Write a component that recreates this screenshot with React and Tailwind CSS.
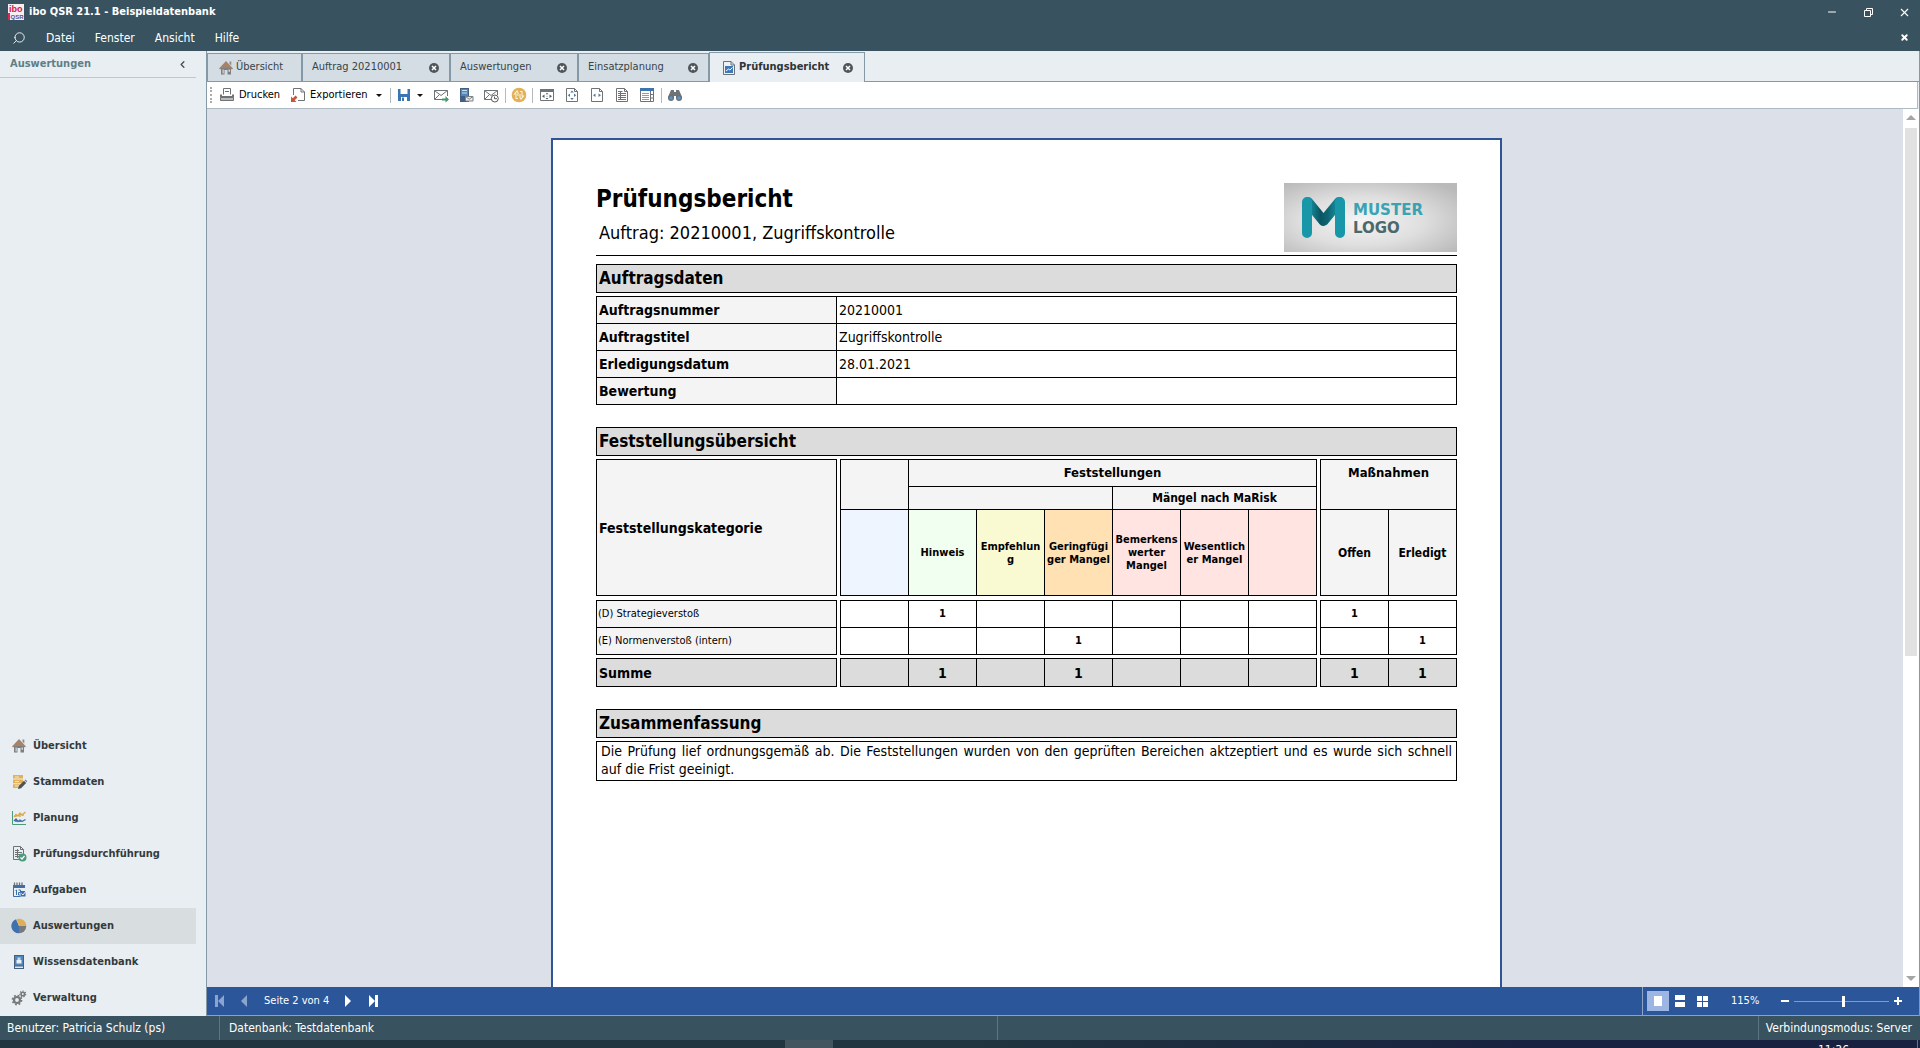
import { ChevronLeft, Minus, Search, X } from "lucide-react";

const HomeIcon = () => (
  <svg width="16" height="16" viewBox="0 0 16 16" aria-hidden="true">
    <path d="M3 8h10v6.5H9.5V10h-3v4.5H3z" fill="#7d7f82" />
    <path d="M4.6 9.5h1v4h-1zM10.6 9.5h1.2v2.2h-1.2z" fill="#e8eef1" />
    <path d="M8 1 15 8.4l-1.2 1.2L8 4 2.2 9.6 1 8.4z" fill="#a5836b" />
    <path d="M8 3.2 13 8H3z" fill="#a5836b" />
    <path d="M11.5 1.5h1.8v4l-1.8-1.8z" fill="#8b8d90" />
  </svg>
);

const MasterDataIcon = () => (
  <svg width="16" height="16" viewBox="0 0 16 16" aria-hidden="true">
    <path d="M2 1h10v3.6H2zM2 5.6h10v3.6H2zM2 10.2h8v3.8H2z" fill="#e3b158" />
    <path d="M4 2.5h4v1H4zM4 7h4v1H4zM4 11.6h4v1H4z" fill="#f7e7c4" />
    <path d="m7 15 .8-3L13 6.8l2.2 2.2L10 14.2z" fill="#4d5256" />
    <path d="m13.6 6.2.9-.8 2 2-.8.9z" fill="#77797c" />
  </svg>
);

const PlanningIcon = () => (
  <svg width="16" height="16" viewBox="0 0 16 16" fill="none" aria-hidden="true">
    <path d="M1.5 1v13.5H15" stroke="#4c9a7c" />
    <path d="m3 7 2-2.5L7 6l2-3 2 2 3.5-3M5 4v3M9 3v4M12 3.5V6" stroke="#dba94c" strokeWidth="1.4" />
    <path d="m3 11 2-2 2 2.5 2-1.5 2 1.5 3.5-2M5 9v3M9 10v2" stroke="#3d6fa8" strokeWidth="1.4" />
  </svg>
);

const AuditIcon = () => (
  <svg width="16" height="16" viewBox="0 0 16 16" fill="none" aria-hidden="true">
    <path d="M2.5.5h7l3 3v10h-10z" stroke="#6f7376" />
    <path d="M9.5.5v3h3M4 4.500h4M4 6.500h7M4 8.500h7M4 10.500h4M6.500 3v9" stroke="#6f7376" />
    <circle cx="11.500" cy="11.500" r="4" fill="#4c9a7c" />
    <path d="m9.500 11.500 1.500 1.500 2.500-3" stroke="#fff" strokeWidth="1.2" />
  </svg>
);

const TasksIcon = () => (
  <svg width="16" height="16" viewBox="0 0 16 16" fill="none" aria-hidden="true">
    <path d="M2 3h12v3H2z" fill="#3d6fa8" />
    <path d="M3.500.5v3M6 .5v3M8.500.5v3M11 .5v3" stroke="#6f7376" strokeWidth="1.3" />
    <path d="M2.500 6v8.500h7" stroke="#3d6fa8" />
    <path d="m4.500 8.500 1-.5v5M7.500 8h2v2.500h-2V13H9" stroke="#3d6fa8" />
    <path d="M9.500 9h5v5.500h-5z" fill="#3d6fa8" />
    <path d="m10.500 11.500 1.300 1.500 3.400-4" stroke="#fff" />
  </svg>
);

const PieIcon = () => (
  <svg width="16" height="16" viewBox="0 0 16 16" aria-hidden="true">
    <path d="M8 8 5 1.2A7.3 7.3 0 0 0 8 15.3z" fill="#3f72ad" />
    <path d="M8 8 5.5 1.1A7.3 7.3 0 0 1 15.3 8z" fill="#dfae5a" />
    <path d="M8 8h7.3A7.3 7.3 0 0 1 8 15.3z" fill="#77797c" />
  </svg>
);

const KnowledgeIcon = () => (
  <svg width="16" height="16" viewBox="0 0 16 16" aria-hidden="true">
    <path d="M3 1h10v14H3z" fill="#44607c" />
    <path d="M4 2h8v9.500H4z" fill="#4f86bd" />
    <path d="M5.500 6h5v3.500h-5z" fill="#e9f0f6" />
    <path d="M6.500 3.500h3V6h-3z" fill="#c7d8e8" />
    <path d="M4 12.500h8V14H4z" fill="#dfe6ec" />
  </svg>
);

const GearsIcon = () => (
  <svg width="16" height="16" viewBox="0 0 16 16" fill="none" aria-hidden="true">
    <circle cx="6" cy="10" r="3" stroke="#77797c" strokeWidth="2.200" />
    <circle cx="6" cy="10" r="4.600" stroke="#77797c" strokeWidth="1.600" strokeDasharray="1.800 1.810" />
    <circle cx="11.800" cy="4" r="1.800" stroke="#77797c" strokeWidth="1.600" />
    <circle cx="11.800" cy="4" r="2.900" stroke="#77797c" strokeWidth="1.200" strokeDasharray="1.200 1.400" />
  </svg>
);

const PrinterIcon = () => (
  <svg width="16" height="16" viewBox="0 0 16 16" fill="none" aria-hidden="true">
    <path d="M4.500 7.500v-6h7v6" stroke="#707376" />
    <path d="M6 4.500h4" stroke="#707376" />
    <path d="M1 7.500h2V9h10V7.500h2v3H1z" fill="#707376" />
    <path d="M1.500 10.500h13v3h-13z" stroke="#707376" fill="#b9bbbd" />
  </svg>
);

const ExportIcon = () => (
  <svg width="16" height="16" viewBox="0 0 16 16" fill="none" aria-hidden="true">
    <path d="M3.500 8V1.500h7.500l3.500 3.500v8.500H8" stroke="#707376" />
    <path d="M11 1.500V5h3.500" stroke="#707376" />
    <path d="M1 9.500V15h5.500l-1.800-1.800L7.500 10.500 5.500 8.500 2.800 11.300z" fill="#c8553d" />
  </svg>
);

const SaveIcon = () => (
  <svg width="14" height="14" viewBox="0 0 14 14" aria-hidden="true">
    <path d="M1 1h12v12H1z" fill="#3c73b1" />
    <path d="M3.500 1h7v5h-7zM4 9h6v4H4z" fill="#fff" />
    <path d="M5 9.500h2V13H5z" fill="#3c73b1" />
  </svg>
);

const MailSendIcon = () => (
  <svg width="16" height="16" viewBox="0 0 16 16" fill="none" aria-hidden="true">
    <path d="M9 12.500H1.500v-9h13V9" stroke="#707376" />
    <path d="m1.500 3.500 6.500 5 6.500-5M1.500 12.500l5-5" stroke="#707376" />
    <path d="M9 11.500h3.500V9l3.500 3.500-3.500 3V13.500H9z" fill="#45946f" />
  </svg>
);

const ServerMailIcon = () => (
  <svg width="16" height="16" viewBox="0 0 16 16" aria-hidden="true">
    <path d="M2 1h9v14H2z" fill="#3f5f84" />
    <path d="M3 2h7v7H3z" fill="#4f86bd" />
    <path d="M4 3h5v1H4zM4 5.500h5v1H4z" fill="#cfdeec" />
    <path d="M7.500 9.500H15V14H7.500z" fill="#eceef0" stroke="#7b8187" />
    <path d="m7.500 9.500 3.700 2.700L15 9.500" fill="none" stroke="#7b8187" />
  </svg>
);

const MailClockIcon = () => (
  <svg width="16" height="16" viewBox="0 0 16 16" fill="none" aria-hidden="true">
    <path d="M8 12.500H1.500v-9h13V8" stroke="#707376" />
    <path d="m1.500 3.500 6.500 5 6.500-5M1.500 12.500l5-5" stroke="#707376" />
    <circle cx="11.800" cy="11.500" r="3.500" fill="#fff" stroke="#55585b" />
    <path d="M11.500 9.500v2.200h2.500" stroke="#55585b" />
  </svg>
);

const SyncIcon = () => (
  <svg width="16" height="16" viewBox="0 0 16 16" fill="none" aria-hidden="true">
    <circle cx="8" cy="8" r="7.300" fill="#e2b055" />
    <path d="M7 11.500H5V7H3.500L6 4l1 1.500V9M9 4.500h2V9h1.500L10 12l-1-1.500V7" stroke="#fbf3df" strokeWidth="1.100" />
  </svg>
);

const FitWindowIcon = () => (
  <svg width="16" height="16" viewBox="0 0 16 16" fill="none" aria-hidden="true">
    <path d="M1.500 2.500h13v11h-13z" stroke="#707376" />
    <path d="M1 2h14v3H1z" fill="#707376" />
    <path d="M5.500 7.500v3.500L3 9.200zM10.500 7.500v3.500L13 9.200zM8 5.800 9.500 7.300h-3zM8 12.600 9.500 11h-3z" fill="#55585b" />
    <path d="M7.500 8.700h1v1h-1z" fill="#5b85b5" />
  </svg>
);

const FitPageIcon = () => (
  <svg width="16" height="16" viewBox="0 0 16 16" fill="none" aria-hidden="true">
    <path d="M2.500 1.500h8l3 3v10h-11z" stroke="#707376" />
    <path d="M10.500 1.500v3h3" stroke="#707376" />
    <path d="M6 6.500v3.500L3.800 8.200zM10 6.500v3.500l2.200-1.800zM8 3.500l1.800 2H6.200zM8 13l1.800-2H6.200z" fill="#56779c" />
  </svg>
);

const FitWidthIcon = () => (
  <svg width="16" height="16" viewBox="0 0 16 16" fill="none" aria-hidden="true">
    <path d="M2.500 1.500h8l3 3v10h-11z" stroke="#707376" />
    <path d="M10.500 1.500v3h3" stroke="#707376" />
    <path d="M6.500 6.500v3.500L4 8.200zM9.500 6.500v3.500L12 8.200z" fill="#56779c" />
  </svg>
);

const TextPageIcon = () => (
  <svg width="16" height="16" viewBox="0 0 16 16" fill="none" aria-hidden="true">
    <path d="M2.500 1.500h8l3 3v10h-11z" stroke="#707376" />
    <path d="M10.500 1.500v3h3M4 4.500h4.500M4 6.500h8M4 8.500h8M4 10.500h8M4 12.500h8M6.500 4v9" stroke="#707376" />
  </svg>
);

const ThumbnailsIcon = () => (
  <svg width="16" height="16" viewBox="0 0 16 16" fill="none" aria-hidden="true">
    <path d="M1.500 1.500h13v13h-13z" fill="#fff" stroke="#707376" />
    <path d="M1 1h14v3H1z" fill="#3c73b1" />
    <path d="M11.500 4v10M11.500 7.500H15M11.500 11H15" stroke="#707376" />
    <path d="M3 6.500h7M3 8.500h7M3 10.500h7M3 12.500h7" stroke="#7ba0c8" />
  </svg>
);

const BinocularsIcon = () => (
  <svg width="16" height="16" viewBox="0 0 16 16" aria-hidden="true">
    <path d="M4 3h3v2h2V3h3l3 7v1H9V9H7v2H1v-1z" fill="#707376" />
    <circle cx="4" cy="11" r="3" fill="#66707b" />
    <circle cx="12" cy="11" r="3" fill="#66707b" />
    <circle cx="4" cy="11" r="1.700" fill="#5d93c9" />
    <circle cx="12" cy="11" r="1.700" fill="#5d93c9" />
  </svg>
);

const ReportIcon = () => (
  <svg width="14" height="16" viewBox="0 0 14 16" fill="none" aria-hidden="true">
    <path d="M1.500 1.500h7.500l3.500 3.500v9.500h-11z" fill="#eef2f5" stroke="#6a7178" />
    <path d="M9 1.500V5h3.500" stroke="#6a7178" />
    <path d="M3 6h8v7H3z" fill="#3f78b5" />
    <path d="m4 11 2.500-2L8 10l2.500-2.500" stroke="#fff" />
  </svg>
);

const AppIcon = () => (
  <svg width="16" height="16" viewBox="0 0 16 16" aria-hidden="true">
    <path d="M0 0h16v16H0z" fill="#f6eef2" />
    <path d="M0 9h2v7H0z" fill="#d8265a" />
    <text x="1" y="7.500" fontSize="9" fontWeight="700" fontFamily="Liberation Sans" fill="#d4144a">ibo</text>
    <text x="2.500" y="15" fontSize="6" fontWeight="700" fontFamily="Liberation Sans" fill="#5a4f98">QSR</text>
  </svg>
);

const Logo = () => (
  <svg className="shrink-0" width="173" height="69" viewBox="0 0 173 69" role="img" aria-label="Muster Logo">
    <defs>
      <radialGradient id="logoBg" cx="0.45" cy="0.55" r="0.7">
        <stop offset="0" stopColor="#f4f4f4" />
        <stop offset="0.5" stopColor="#dfdfdf" />
        <stop offset="1" stopColor="#b9b9b9" />
      </radialGradient>
      <linearGradient id="logoFold" x1="0" y1="0" x2="1" y2="0">
        <stop offset="0" stopColor="#1797a8" />
        <stop offset="0.4" stopColor="#0b5562" />
        <stop offset="0.65" stopColor="#0e6673" />
        <stop offset="1" stopColor="#1797a8" />
      </linearGradient>
    </defs>
    <rect width="173" height="69" fill="url(#logoBg)" />
    <g fill="none" strokeLinecap="round" strokeLinejoin="round" strokeWidth="10">
      <path d="M24 19 39.500 38 55 19" stroke="url(#logoFold)" />
      <path d="M23 50V19M56 50V19" stroke="#1797a8" />
    </g>
    <g fontFamily="DejaVu Sans" fontWeight="700" fontSize="15">
      <text x="69" y="32" fill="#3aa3b3">MUSTER</text>
      <text x="69" y="50" fill="#4d686c">LOGO</text>
    </g>
  </svg>
);

const menuItems = ["Datei", "Fenster", "Ansicht", "Hilfe"];

const navItems = [
  { label: "Übersicht", icon: HomeIcon },
  { label: "Stammdaten", icon: MasterDataIcon },
  { label: "Planung", icon: PlanningIcon },
  { label: "Prüfungsdurchführung", icon: AuditIcon },
  { label: "Aufgaben", icon: TasksIcon },
  { label: "Auswertungen", icon: PieIcon, active: true },
  { label: "Wissensdatenbank", icon: KnowledgeIcon },
  { label: "Verwaltung", icon: GearsIcon },
];

const tabs = [
  { label: "Auftrag 20210001", width: "w-[148px]" },
  { label: "Auswertungen", width: "w-32" },
  { label: "Einsatzplanung", width: "w-[131px]" },
];

const orderData = [
  ["Auftragsnummer", "20210001"],
  ["Auftragstitel", "Zugriffskontrolle"],
  ["Erledigungsdatum", "28.01.2021"],
  ["Bewertung", ""],
];

const findingColumns = [
  { label: "", color: "bg-[#eef5ff]" },
  { label: "Hinweis", color: "bg-[#f0fff0]" },
  { label: "Empfehlun\ng", color: "bg-[#fafad2]" },
  { label: "Geringfügi\nger Mangel", color: "bg-[#ffe1b3]" },
  { label: "Bemerkens\nwerter\nMangel", color: "bg-[#ffe4e1]" },
  { label: "Wesentlich\ner Mangel", color: "bg-[#ffe4e1]" },
  { label: "", color: "bg-[#ffe4e1]" },
];

const findingRows = [
  { name: "(D) Strategieverstoß", findings: ["", "1", "", "", "", "", ""], measures: ["1", ""] },
  { name: "(E) Normenverstoß (intern)", findings: ["", "", "", "1", "", "", ""], measures: ["", "1"] },
];

const totals = { findings: ["", "1", "", "1", "", "", ""], measures: ["1", "1"] };

const TitleBar = () => (
  <header className="bg-[#38535f] text-white">
    <div className="flex h-6 items-center justify-between px-2">
      <h1 className="flex items-center gap-[5px] text-[11px] font-bold">
        <AppIcon />
        ibo QSR 21.1 - Beispieldatenbank
      </h1>
      <div className="flex items-center gap-5">
        <button type="button" aria-label="Minimieren" className="flex size-4 items-center justify-center">
          <Minus size={12} strokeWidth={2} />
        </button>
        <button type="button" aria-label="Wiederherstellen" className="flex size-4 items-center justify-center">
          <svg width="9" height="9" viewBox="0 0 9 9" fill="none" stroke="currentColor" aria-hidden="true">
            <path d="M.5 2.500h6v6h-6zM2.500 2.500v-2h6v6h-2" />
          </svg>
        </button>
        <button type="button" aria-label="Schließen" className="flex size-4 items-center justify-center">
          <X size={13} strokeWidth={2} />
        </button>
      </div>
    </div>
    <nav className="flex h-[27px] items-center gap-5 px-[11px] text-xs">
      <button type="button" aria-label="Suchen" className="pl-px">
        <Search size={14} strokeWidth={1.5} className="-scale-x-100" />
      </button>
      {menuItems.map((item) => (
        <button key={item} type="button">{item}</button>
      ))}
      <button type="button" aria-label="Fenster schließen" className="ml-auto">
        <X size={9} strokeWidth={5} />
      </button>
    </nav>
  </header>
);

const Sidebar = () => (
  <aside className="flex w-[206px] shrink-0 flex-col justify-between bg-[#e8eef1]">
    <div className="mr-[10px] flex h-[27px] items-center justify-between border-b border-[#b9cad3] pl-[10px] pr-2 text-[11px] font-bold text-[#5f7f88]">
      Auswertungen
      <button type="button" aria-label="Einklappen" className="text-[#4a4f53]">
        <ChevronLeft size={11} strokeWidth={3} />
      </button>
    </div>
    <nav className="mr-[10px]">
      {navItems.map(({ label, icon: Icon, active }) => (
        <a
          key={label}
          href="#"
          className={`flex h-9 items-center gap-[6px] pl-[11px] text-[11px] font-bold text-[#333a3d] ${active ? "bg-[#d8dddf]" : ""}`}
        >
          <Icon />
          {label}
        </a>
      ))}
    </nav>
  </aside>
);

const CloseDot = () => (
  <svg width="10" height="10" viewBox="0 0 10 10" aria-hidden="true">
    <circle cx="5" cy="5" r="5" fill="#4f565b" />
    <path d="m3 3 4 4M7 3 3 7" stroke="#fff" strokeWidth="1.5" />
  </svg>
);

const TabBar = () => (
  <div className="flex h-[31px] items-end border-b border-[#8499a5] bg-[#e8eef1] text-[11px] text-[#3a4247]">
    <button type="button" className="flex h-7 w-[95px] items-center gap-[2px] border-x border-t border-[#8499a5] bg-[#d4dde4] pl-[10px]">
      <HomeIcon />
      Übersicht
    </button>
    {tabs.map(({ label, width }) => (
      <div key={label} className={`flex h-7 items-center justify-between border-x border-t border-[#8499a5] bg-[#d4dde4] pl-[9px] pr-[10px] ${width}`}>
        <button type="button">{label}</button>
        <button type="button" aria-label={`${label} schließen`}><CloseDot /></button>
      </div>
    ))}
    <div className="-mb-px flex h-[30px] w-[156px] items-center justify-between border-x border-t border-[#8499a5] bg-[#e8eef1] pl-3 pr-[11px] font-bold text-[#2e3437]">
      <button type="button" className="flex items-center gap-[3px]">
        <ReportIcon />
        Prüfungsbericht
      </button>
      <button type="button" aria-label="Prüfungsbericht schließen"><CloseDot /></button>
    </div>
  </div>
);

const Caret = () => (
  <svg width="6" height="3" viewBox="0 0 6 3" aria-hidden="true">
    <path d="M0 0h6L3 3z" fill="#111" />
  </svg>
);

const Divider = () => <span className="h-[15px] w-px bg-[#b4b9bd]" />;

const ToolButton = ({ label, children }) => (
  <button type="button" aria-label={label}>{children}</button>
);

const Toolbar = () => (
  <div className="mr-px flex h-[27px] items-center border-b border-r border-[#aebbc3] bg-white text-[11px] text-black">
    <span className="ml-[3px] h-4 border-l-2 border-dotted border-[#a9adb0]" />
    <button type="button" className="ml-[7px] flex items-center gap-1">
      <PrinterIcon />
      Drucken
    </button>
    <button type="button" className="ml-[10px] flex items-center gap-1">
      <ExportIcon />
      Exportieren
    </button>
    <span className="mx-2 flex"><Caret /></span>
    <div className="flex items-center gap-[6px]">
      <Divider />
      <ToolButton label="Speichern"><SaveIcon /></ToolButton>
      <Caret />
    </div>
    <div className="ml-[10px] flex items-center gap-[9px]">
      <ToolButton label="Per E-Mail senden"><MailSendIcon /></ToolButton>
      <ToolButton label="Im Archiv ablegen"><ServerMailIcon /></ToolButton>
      <ToolButton label="Später senden"><MailClockIcon /></ToolButton>
    </div>
    <div className="ml-[6px] flex items-center gap-[5px]">
      <Divider />
      <ToolButton label="Aktualisieren"><SyncIcon /></ToolButton>
      <Divider />
    </div>
    <div className="ml-[6px] flex items-center gap-[9px]">
      <ToolButton label="An Fenster anpassen"><FitWindowIcon /></ToolButton>
      <ToolButton label="Ganze Seite"><FitPageIcon /></ToolButton>
      <ToolButton label="Seitenbreite"><FitWidthIcon /></ToolButton>
      <ToolButton label="Textansicht"><TextPageIcon /></ToolButton>
      <ToolButton label="Miniaturen"><ThumbnailsIcon /></ToolButton>
    </div>
    <div className="ml-[6px] flex items-center gap-[5px]">
      <Divider />
      <ToolButton label="Suchen"><BinocularsIcon /></ToolButton>
    </div>
  </div>
);

const SectionHeading = ({ children }) => (
  <h3 className="mb-[3px] h-[29px] border border-black bg-[#dcdcdc] px-[2px] text-[17px] leading-[27px] font-bold">
    {children}
  </h3>
);

const OrderTable = () => (
  <table className="w-full table-fixed border-collapse text-left text-sm leading-5">
    <colgroup>
      <col className="w-60" />
      <col />
    </colgroup>
    <tbody>
      {orderData.map(([label, value]) => (
        <tr key={label} className="h-[27px]">
          <th scope="row" className="border border-black bg-[#f4f4f4] px-[2px] font-bold">{label}</th>
          <td className="border border-black px-[2px]">{value}</td>
        </tr>
      ))}
    </tbody>
  </table>
);

// Empty cell that keeps the column blocks apart
const Gap = () => <td className="p-0" />;

const CountCells = ({ values }) =>
  values.map((value, i) => (
    <td key={i} className="border border-black p-0">{value}</td>
  ));

const FindingsTable = () => (
  <table className="w-full table-fixed border-collapse text-center">
    <colgroup>
      <col className="w-60" />
      <col className="w-1" />
      <col span="7" />
      <col className="w-1" />
      <col span="2" />
    </colgroup>
    <thead>
      <tr className="h-[27px] text-[13px] leading-4">
        <th rowSpan="3" className="border border-black bg-[#f4f4f4] px-[2px] text-left text-sm">Feststellungskategorie</th>
        <td rowSpan="3" className="p-0" />
        <td rowSpan="2" className="border border-black bg-[#f4f4f4] p-0" />
        <th colSpan="6" className="border border-black bg-[#f4f4f4] p-0">Feststellungen</th>
        <td rowSpan="3" className="p-0" />
        <th colSpan="2" rowSpan="2" className="border border-black bg-[#f4f4f4] px-0 pt-[5px] pb-0 align-top">Maßnahmen</th>
      </tr>
      <tr className="h-[23px] text-xs leading-4">
        <td colSpan="3" className="border border-black bg-[#f4f4f4] p-0" />
        <th colSpan="3" className="border border-black bg-[#f4f4f4] p-0">Mängel nach MaRisk</th>
      </tr>
      <tr className="h-[86px] text-[11px] leading-[13px]">
        {findingColumns.map(({ label, color }, i) => (
          <th key={i} className={`border border-black p-0 whitespace-pre-line ${color}`}>{label}</th>
        ))}
        <th className="border border-black bg-[#f4f4f4] p-0 text-xs">Offen</th>
        <th className="border border-black bg-[#f4f4f4] p-0 text-xs">Erledigt</th>
      </tr>
    </thead>
    <tbody className="text-[11px] leading-4 font-bold">
      <tr className="h-[5px]"><td colSpan="12" className="p-0" /></tr>
      {findingRows.map(({ name, findings, measures }) => (
        <tr key={name} className="h-[27px]">
          <th scope="row" className="border border-black bg-[#f4f4f4] px-px text-left font-normal">{name}</th>
          <Gap />
          <CountCells values={findings} />
          <Gap />
          <CountCells values={measures} />
        </tr>
      ))}
      <tr className="h-1"><td colSpan="12" className="p-0" /></tr>
    </tbody>
    <tfoot className="text-sm leading-5 font-bold">
      <tr className="h-7">
        <th scope="row" className="border border-black bg-[#dcdcdc] px-[2px] text-left">Summe</th>
        <Gap />
        {totals.findings.map((value, i) => (
          <td key={i} className="border border-black bg-[#dcdcdc] p-0">{value}</td>
        ))}
        <Gap />
        {totals.measures.map((value, i) => (
          <td key={i} className="border border-black bg-[#dcdcdc] p-0">{value}</td>
        ))}
      </tr>
    </tfoot>
  </table>
);

const ReportPage = () => (
  <article className="min-h-[1345px] w-full max-w-[951px] border-2 border-[#2f5597] bg-white px-[43px] pt-[43px] text-black">
    <div className="flex items-start justify-between border-b border-black pb-[3px]">
      <div>
        <h2 className="text-2xl leading-8 font-bold">Prüfungsbericht</h2>
        <p className="mt-[6px] pl-[3px] text-lg leading-6">Auftrag: 20210001, Zugriffskontrolle</p>
      </div>
      <Logo />
    </div>
    <section className="mt-2">
      <SectionHeading>Auftragsdaten</SectionHeading>
      <OrderTable />
    </section>
    <section className="mt-[22px]">
      <SectionHeading>Feststellungsübersicht</SectionHeading>
      <FindingsTable />
    </section>
    <section className="mt-[22px]">
      <SectionHeading>Zusammenfassung</SectionHeading>
      <p className="border border-black px-1 pb-[2px] text-justify text-sm leading-[18px]">
        Die Prüfung lief ordnungsgemäß ab. Die Feststellungen wurden von den geprüften Bereichen aktzeptiert und es wurde sich schnell auf&nbsp;die Frist geeinigt.
      </p>
    </section>
  </article>
);

const ScrollBar = () => (
  <div className="flex w-4 shrink-0 flex-col items-center bg-white py-[6px]">
    <svg width="10" height="5" viewBox="0 0 10 5" aria-hidden="true"><path d="M0 5h10L5 0z" fill="#a5a5a5" /></svg>
    <div className="mt-2 h-[61%] w-3 bg-[#e1e1e1]" />
    <svg className="mt-auto" width="10" height="5" viewBox="0 0 10 5" aria-hidden="true"><path d="M0 0h10L5 5z" fill="#a5a5a5" /></svg>
  </div>
);

const Pager = () => (
  <div className="flex h-[29px] items-center justify-between border-b border-[#8ea3b8] bg-[#2b579a] text-[11px] text-white">
    <div className="flex items-center gap-4 pl-2">
      <button type="button" aria-label="Erste Seite" disabled>
        <svg width="10" height="12" viewBox="0 0 10 12" fill="#8aa3cf" aria-hidden="true"><path d="M0 0h3v12H0zM9 0v12L3 6z" /></svg>
      </button>
      <button type="button" aria-label="Vorherige Seite" disabled>
        <svg width="7" height="12" viewBox="0 0 7 12" fill="#8aa3cf" aria-hidden="true"><path d="M6 0v12L0 6z" /></svg>
      </button>
      <span>Seite 2 von 4</span>
      <button type="button" aria-label="Nächste Seite">
        <svg width="7" height="12" viewBox="0 0 7 12" fill="#fff" aria-hidden="true"><path d="M0 0v12l6-6z" /></svg>
      </button>
      <button type="button" aria-label="Letzte Seite">
        <svg width="10" height="12" viewBox="0 0 10 12" fill="#fff" aria-hidden="true"><path d="M7 0h3v12H7zM1 0v12l6-6z" /></svg>
      </button>
    </div>
    <div className="flex h-full items-center border-l border-[#8ea3c8] pr-[17px] pl-1">
      <button type="button" aria-label="Einzelseite" className="flex h-5 w-[22px] items-center justify-center bg-[#9db5e2]">
        <svg width="8" height="10" viewBox="0 0 8 10" fill="#fff" aria-hidden="true"><path d="M0 0h8v10H0z" /></svg>
      </button>
      <button type="button" aria-label="Fortlaufend" className="flex h-5 w-[22px] items-center justify-center">
        <svg width="10" height="12" viewBox="0 0 10 12" fill="#fff" aria-hidden="true"><path d="M0 0h10v5H0zM0 7h10v5H0z" /></svg>
      </button>
      <button type="button" aria-label="Mehrere Seiten" className="flex h-5 w-[22px] items-center justify-center">
        <svg width="11" height="11" viewBox="0 0 11 11" fill="#fff" aria-hidden="true"><path d="M0 0h5v5H0zM6 0h5v5H6zM0 6h5v5H0zM6 6h5v5H6z" /></svg>
      </button>
      <label htmlFor="zoom" className="ml-[18px] w-[50px]">115%</label>
      <button type="button" aria-label="Verkleinern">
        <svg width="8" height="8" viewBox="0 0 8 8" fill="#fff" aria-hidden="true"><path d="M0 3h8v2H0z" /></svg>
      </button>
      <input
        id="zoom"
        type="range"
        min="0"
        max="100"
        defaultValue="52"
        className="mx-[5px] h-4 w-[95px] appearance-none bg-transparent [&::-webkit-slider-runnable-track]:h-px [&::-webkit-slider-runnable-track]:bg-[#7f9acb] [&::-webkit-slider-thumb]:-mt-[5px] [&::-webkit-slider-thumb]:h-[11px] [&::-webkit-slider-thumb]:w-[3px] [&::-webkit-slider-thumb]:appearance-none [&::-webkit-slider-thumb]:bg-white"
      />
      <button type="button" aria-label="Vergrößern">
        <svg width="8" height="8" viewBox="0 0 8 8" fill="#fff" aria-hidden="true"><path d="M0 3h3V0h2v3h3v2H5v3H3V5H0z" /></svg>
      </button>
    </div>
  </div>
);

const StatusBar = () => (
  <footer className="flex h-6 shrink-0 items-center bg-[#38535f] text-xs leading-6 text-white">
    <span className="w-[219px] shrink-0 pl-[7px]">Benutzer: Patricia Schulz (ps)</span>
    <span className="flex-5 border-l border-[#5d7580] pl-[9px]">Datenbank: Testdatenbank</span>
    <span className="flex flex-6 justify-end border-l border-[#5d7580]">
      <span className="border-l border-[#5d7580] pr-2 pl-[7px]">Verbindungsmodus: Server</span>
    </span>
  </footer>
);

const TaskBar = () => (
  <div className="flex h-2 shrink-0 overflow-hidden bg-linear-to-r from-[#20353f] from-50% to-[#18213f] to-80% text-xs text-white">
    <span className="ml-[785px] w-12 bg-[#43565f]" />
    <span className="mr-[68px] ml-auto pt-[2px]">11:36</span>
    <span className="border-l border-[#6b7390] pl-[2px]" />
  </div>
);

const App = () => (
  <div className="flex h-screen flex-col overflow-hidden bg-[#e8eef1] font-['DejaVu_Sans_Condensed','DejaVu_Sans',sans-serif]">
    <TitleBar />
    <div className="flex min-h-0 flex-1">
      <Sidebar />
      <main className="flex min-w-0 flex-1 flex-col border-x border-[#8499a5]">
        <TabBar />
        <Toolbar />
        <div className="flex min-h-0 flex-1">
          <div className="flex flex-1 items-start justify-center overflow-hidden bg-[#dce0e8] pt-[29px] pr-[57px]">
            <ReportPage />
          </div>
          <ScrollBar />
        </div>
        <Pager />
      </main>
    </div>
    <StatusBar />
    <TaskBar />
  </div>
);

export default App;
